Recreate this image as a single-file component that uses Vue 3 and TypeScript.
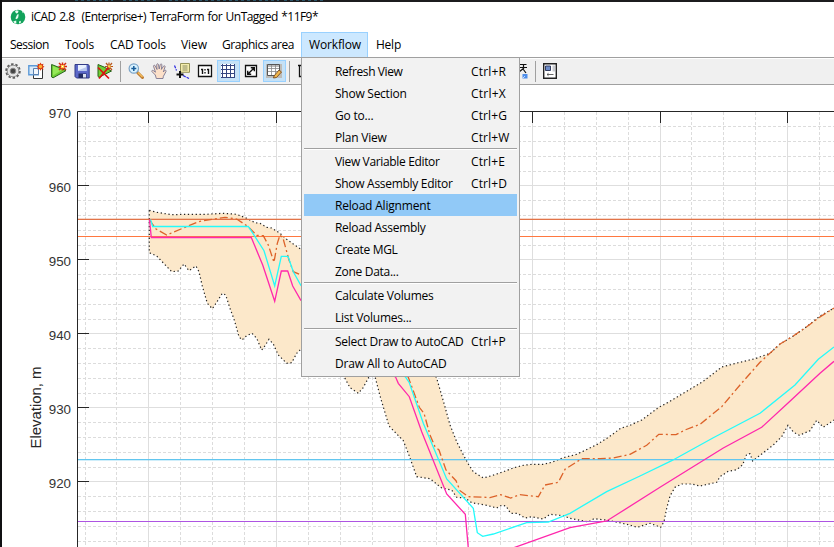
<script setup lang="ts">
interface MenuLabel { text: string; width: number; box: number; open?: boolean }
interface MenuEntry { text: string; width: number; keys?: string; keyWidth?: number; active?: boolean }

/* Spreads a label's letters so that it fills the given width. */
const vFit = {
  mounted(el: HTMLElement, binding: { value: number }) {
    const natural = el.getBoundingClientRect().width
    const count = (el.textContent ?? '').length
    el.style.letterSpacing = `${(binding.value - natural) / count}px`
  },
}

const title = 'iCAD 2.8\u00a0 (Enterprise+) TerraForm for UnTagged *11F9*'

const menus: MenuLabel[] = [
  { text: 'Session', width: 39, box: 55 },
  { text: 'Tools', width: 29, box: 45 },
  { text: 'CAD Tools', width: 56, box: 71 },
  { text: 'View', width: 26, box: 41 },
  { text: 'Graphics area', width: 72, box: 87 },
  { text: 'Workflow', width: 52, box: 67, open: true },
  { text: 'Help', width: 25, box: 41 },
]

const groups: MenuEntry[][] = [
  [
    { text: 'Refresh View', width: 67.5, keys: 'Ctrl+R', keyWidth: 35 },
    { text: 'Show Section', width: 71.5, keys: 'Ctrl+X', keyWidth: 35 },
    { text: 'Go to...', width: 38.5, keys: 'Ctrl+G', keyWidth: 36 },
    { text: 'Plan View', width: 51.5, keys: 'Ctrl+W', keyWidth: 38.5 },
  ],
  [
    { text: 'View Variable Editor', width: 104.5, keys: 'Ctrl+E', keyWidth: 34 },
    { text: 'Show Assembly Editor', width: 117.5, keys: 'Ctrl+D', keyWidth: 36 },
    { text: 'Reload Alignment', width: 95.5, active: true },
    { text: 'Reload Assembly', width: 90.5 },
    { text: 'Create MGL', width: 62.5 },
    { text: 'Zone Data...', width: 63.5 },
  ],
  [
    { text: 'Calculate Volumes', width: 98.500 },
    { text: 'List Volumes...', width: 76.500 },
  ],
  [
    { text: 'Select Draw to AutoCAD', width: 128.500, keys: 'Ctrl+P', keyWidth: 35 },
    { text: 'Draw All to AutoCAD', width: 111.500 },
  ],
]

const rows = [
  { y: 111, label: '970' }, { y: 185, label: '960' }, { y: 259, label: '950' },
  { y: 333, label: '940' }, { y: 407, label: '930' }, { y: 481, label: '920' },
]
const columns = [148, 276, 404, 532, 660, 787]
const minorOffsets = [15, 30, 45, 60]
const minorRows = rows.flatMap(r => minorOffsets.map(o => r.y + o))
const minorColumns = [85, 116, 180, 212, 244, 308, 340, 372, 436, 468, 500, 564, 596, 628, 691, 723, 755, 819]

const topEdge = '149.3,210.3 156.7,212.3 171.7,214.7 186.7,214.3 206.7,214.3 223,213.3 236.7,214.3 246.7,218.3 255,222.7 260,223.3 266.7,227.3 271.7,228 280,233.3 286.7,239.3 293.3,244 300.7,249 350,270 400,310 436.7,378.3 444,403.3 450,425 456.7,441.7 461.7,451.7 468.3,464 473.3,471.7 483.3,478 491.7,475.7 503.3,471.7 513.3,468 523.3,465.3 532,464.3 543.3,464.3 551.7,462.3 563.3,457.7 576.7,454.3 596.7,444.7 608.3,437.3 620.7,428.3 630,425.3 641.7,420 658.8,407.3 668.3,402.3 683.3,393.3 703.3,381.3 721.7,367 740,362.3 755,358.7 770,353.3 780,344 793.3,336 806.7,326.7 820,316 834,308'
const bottomEdge = '149.3,210.3 149.3,252.7 156.7,256 171.7,271.7 178.3,271 184,264 189,270.7 196,266 199,271.7 202.3,286 207.3,303.3 212.3,308.7 216.7,302.3 222.3,293.3 225.7,295 230,308.3 234.3,320 239,336.7 242,340 246.7,335.7 252,333.3 256.7,338.3 261.7,350 265,345.7 269,339.3 273.3,344 278.3,355 286.7,363.3 291.7,362.7 296.7,353.3 300.7,349.3 335,360 345,378.3 350,387.7 358.3,393.3 362.7,388.3 368.3,378.3 371,370 374,370 375.7,379.3 380.7,398.3 389,426 403.3,440.7 408.3,453.3 416.7,476.7 430,478.7 441.7,488 451.7,490 456.7,497.3 465,498 471.7,502.7 486.7,505.3 496.7,508 501.7,505.3 506,506 510.7,513.3 517.3,513.3 525,518 531.7,516.7 543.3,519 550,514.3 563.3,515.7 570,518.3 588.3,522 594,518.7 608.3,520.3 626.7,524.3 637.3,527.3 650,523.3 660.7,527.3 664,521.7 666.7,508.3 670,496 675,487.3 681.7,484 691.7,484 700,486 716.7,482.3 720,476.7 728.3,471.3 736.7,469.7 742.7,464.7 746.7,454.3 750,453.7 752.7,461 761.7,454 773.3,445 781.7,436.7 788,425.3 793.3,432 799.3,435.3 810,430.7 816.7,420.3 823.3,427.3 830,422.7 834,420'
const zone = `${topEdge} ${bottomEdge.split(' ').reverse().join(' ')}`

const ground = '149.3,219.5 156,229 166.7,235 198.3,221.7 211.7,219.3 225,217.3 236.7,219 248.3,226.7 256.7,235.3 263.3,235.7 268.3,245 274,262.3 277.3,243.3 280,235 283.3,239.3 289,260 293.3,271.7 300.7,274.7 350,300 408.3,377.3 414,392.7 419.3,407.3 424,413.3 430,435 435,446.7 439,450 446,470 456,480.7 460,490.7 468.3,496.7 486.7,497.3 490,497.7 500.7,494.7 510.7,498 520,494.7 538.3,496.7 545,485 558.3,482.3 565,469.3 581.7,458.7 600,458.7 613.3,458 630,454.3 646.7,445.3 658.8,434.3 676,434.7 685,430 700,424.3 721.7,406.7 740,385 760,362.3 780,344 793.3,336 806.7,326.7 820,317 834,308'
const design = '150.5,219.5 152.7,226.5 248.3,226.5 255,236.7 264,250.7 274.7,286 281.3,256.3 288,256.3 293.3,271.7 300.7,285 360,340 405.7,377.3 409.3,382.7 423.3,423.3 446.7,479 473.3,508.3 477.3,532.7 482.7,536.3 493.3,534 526.7,522.7 548.3,522 570,513.3 606.7,491.7 640,476 671.7,460.7 713.3,437.7 760,413.3 795,385 818.3,359.3 834,347'
const formation = '149.5,219.5 151.3,237.5 251.3,237.5 262.7,265 274.7,301.3 281.3,271 287.7,271 292.7,286 300.7,300 350,340 395.7,377.3 398.3,383.3 409.3,396.7 421.7,431.7 446.7,494 465.3,514.3 468.3,548'
const formationEast = '513,548 570,527.7 606.7,521 660,487.3 723.3,448 761.7,427.3 788.3,402.7 820,373.3 834,361.3'
</script>

<template>
  <div class="screen">
    <div class="backdrop"><i class="code c1"></i><i class="code c2"></i><i class="code c3"></i><i class="code c4"></i></div>
    <div class="window">
      <header class="titlebar">
        <svg class="logo" width="16" height="16" viewBox="0 0 16 16">
          <circle cx="8" cy="8" r="7.3" fill="#12a25b" />
          <path d="M5 2.2 6.3 1.2 8.6 1.8 8 3.8 6.8 4.6 5.8 4zM7.2 5.6 8.7 5.2 8.2 8.5 6.8 10.3 5.4 9.6zM3.2 12.6 6.2 11.5 6.4 14.6 4.8 14.6zM9 12.6l1.8-.8-.1 2.2-1.6.5z" fill="#e9fbf1" />
          <path d="M12 1.5 13.8 3 12.8 4.2z" fill="#fff" />
        </svg>
        <span v-fit="287" class="label title">{{ title }}</span>
      </header>

      <nav class="menubar">
        <div v-for="m in menus" :key="m.text" class="menu" :class="{ open: m.open }" :style="{ width: m.box + 'px' }">
          <span v-fit="m.width" class="label">{{ m.text }}</span>
        </div>
      </nav>

      <div class="toolbar">
        <button class="tool first">
          <svg viewBox="0 0 16 16"><circle cx="8" cy="8" r="6.900" fill="none" stroke="#5c5c5c" stroke-width="1.700" stroke-dasharray="2.500 1.835" /><circle cx="8" cy="8" r="5.800" fill="#e4e4e4" stroke="#777" stroke-width=".8" /><circle cx="8" cy="8" r="2.800" fill="#444" stroke="#8a8a8a" /></svg>
        </button>
        <button class="tool">
          <svg viewBox="0 0 16 16"><path d="M5.500 5.500h9v10h-9z" fill="#fff" stroke="#333" /><path d="M.8 2.800h9.500v9H.8z" fill="#d5e8fb" fill-opacity=".8" stroke="#5d9ad8" stroke-width="1.400" /><path d="M5.500 5.500h5v6h-5z" fill="#f4f7fb" stroke="#5a81b0" /><path d="m12.500-.5 1 1.800 2-.6-.6 2 1.600 1-1.600 1 .6 2-2-.6-1 1.700-1-1.700-2 .6.6-2-1.600-1 1.600-1-.6-2 2 .6z" fill="#d93a13" /><circle cx="12.500" cy="3.500" r="1.700" fill="#ffb435" /></svg>
        </button>
        <button class="tool">
          <svg viewBox="0 0 16 16"><path d="M.6 1.500V14l1.500.8L15 7.600 7 4z" fill="#70cf36" stroke="#28651b" /><path d="m2 3 9 4-9 5.500z" fill="#95e858" /><path d="m8 0 7 7M15 0 8 7M11.500-.5v8M7.500 3.500h8.500" stroke="#d72d12" stroke-width="1.500" /><path d="M10 2h3.200v3.200H10z" fill="#ffd348" /><path d="m11 3 1 1" stroke="#fff" /></svg>
        </button>
        <button class="tool">
          <svg viewBox="0 0 16 16"><path d="M1 1.500h13l1.200 1V15H2.500L1 13.500z" fill="#5b68c8" stroke="#333b87" /><path d="M4 2h8.500v6H4z" fill="#e8f0ff" /><path d="M4 7.500 12.500 4v4H4z" fill="#b8c6ee" /><path d="M4.500 10.500h8V15h-8z" fill="#222b63" /><path d="M9 11h3v3.500H9z" fill="#dce2ee" /></svg>
        </button>
        <button class="tool">
          <svg viewBox="0 0 16 16"><path d="M1 1.500v12l1 .8L14.500 8 7 4z" fill="#70cf36" stroke="#28651b" /><path d="m9 0 6 7m0-7L9 7m3-7.500V7M8 3.500h8" stroke="#b85720" stroke-width="1.200" /><path d="M11 2.200h2.500v2.500H11z" fill="#ffd348" /><path d="m1 4.500 11 11M11.500 4.500 2 15.500" stroke="#dc1010" stroke-width="1.700" /></svg>
        </button>
        <i class="divider early"></i>
        <button class="tool">
          <svg viewBox="0 0 16 16"><path d="m9.500 9.500 5 5" stroke="#bd7b32" stroke-width="3" stroke-linecap="round" /><path d="m10 9.500 4.500 4.500" stroke="#f5c05f" stroke-width="1.300" /><circle cx="5.800" cy="5.500" r="4.700" fill="#d8f2ff" stroke="#7ba4c8" stroke-width="1.200" /><path d="M5.800 3v5M3.300 5.500h5" stroke="#175b99" stroke-width="1.500" /></svg>
        </button>
        <button class="tool">
          <svg viewBox="0 0 16 16"><path d="M5.300 15.500 4.300 12 .9 8.500c-.4-1 .6-1.600 1.600-.8l2 1.500-2-6c0-1.200 1.400-1.300 1.800-.2L6 6.500 5.700 1.700C5.900.4 7.200.4 7.500 1.700L8.200 6l1-4.300c.4-1.200 1.800-.9 1.700.3l-.5 4.400L12.500 3.200c.8-.9 1.900-.3 1.500.8l-1.700 5 1.300-1.500c.9-.7 1.900.1 1.400 1l-2.600 4.800-.4 2.200z" fill="#fce0c9" stroke="#7b7590" stroke-width=".9" /></svg>
        </button>
        <button class="tool">
          <svg viewBox="0 0 16 16"><path d="M6.500.5h9v8.800h-9z" fill="#f4edac" stroke="#96935a" /><path d="M8.500 3h5M8.500 5h5M8.500 7h5" stroke="#8b8b68" /><path d="m.5 2.500 2 5M9 12.500l6 3" stroke="#2827e2" stroke-width="1.200" stroke-dasharray="3 1" /><path d="M6 8v7M2.500 11.500h7" stroke="#111" stroke-width="2" /></svg>
        </button>
        <button class="tool">
          <svg viewBox="0 0 16 16"><path d="M1.500 2.500h13v11h-13z" fill="#fff" stroke="#111" stroke-width="1.300" /><path d="M4 6.500h1.500V11M10 6.500h1.500V11" stroke="#111" fill="none" stroke-width="1.400" /><path d="M8 6v1.500M8 9v1.500" stroke="#111" stroke-width="1.300" /></svg>
        </button>
        <button class="tool on">
          <svg viewBox="0 0 16 16"><path d="M1 1h14v14H1z" fill="#fff" /><path d="M2.500 1v14M6.500 1v14M10.500 1v14M14.500 1v14M1 2.500h14M1 6.500h14M1 10.500h14M1 14.500h14" stroke="#344580" /></svg>
        </button>
        <button class="tool">
          <svg viewBox="0 0 16 16"><path d="M2.500 2.500h11v11h-11z" fill="#fff" stroke="#111" stroke-width="1.300" /><path d="m5 11 6-6M7.800 4.700h3.500v3.500M4.700 7.800v3.500h3.500" fill="none" stroke="#111" stroke-width="1.400" /></svg>
        </button>
        <button class="tool on">
          <svg viewBox="0 0 16 16"><path d="M0 1h16v14H0z" fill="#bdbcb9" /><path d="M1.500 1.500h12v9l-2 2h-10z" fill="#fff" stroke="#555" /><path d="M2 2h11v2H2z" fill="#bbb" /><path d="M2 5.500h11M2 8.500h11M5.500 2v10M9.500 2v10" stroke="#888" stroke-width=".8" /><path d="m8 13 5-6 2.500 2-5 5.500-3 .5z" fill="#f1b74c" stroke="#774920" stroke-width=".9" /></svg>
        </button>
        <i class="divider"></i>
        <button class="tool">
          <svg viewBox="0 0 16 16"><path d="M1 2.500h4M2.500 2v11.500H14" fill="none" stroke="#111" stroke-width="1.300" /></svg>
        </button>
        <span class="stretch"></span>
        <button class="tool">
          <svg viewBox="0 0 16 16"><path d="M3 1.500h11.500M8 4.500h7M11.500 1v4M12 5 7 9M11 6l3 4" stroke="#111" stroke-width="1.200" fill="none" /><path d="M10.500 11h5v4.500h-5z" fill="#4e8eea" /><path d="m11 15 2-2" stroke="#c5dcff" /></svg>
        </button>
        <i class="divider late"></i>
        <button class="tool">
          <svg viewBox="0 0 16 16"><path d="M1.700.700h12.600v14.600H1.700z" fill="#fff" stroke="#222" stroke-width="1.400" /><path d="M3.500 3h5v4.500h-5z" fill="#6d8cca" stroke="#333d60" /><path d="M10.500 2.500H13v6h-2.500z" fill="#c9cbd1" /><path d="M5 11.500h6.500M6.500 10.300l-1.500 1.200 1.500 1.200" fill="none" stroke="#555" stroke-width=".9" /></svg>
        </button>
      </div>

      <main class="plot">
        <svg width="832" height="462" viewBox="2 85 832 462">
          <g class="major">
            <path v-for="r in rows" :key="r.label" :d="`M78 ${r.y + 0.5}H834`" />
            <path v-for="x in columns" :key="x" :d="`M${x + 0.5} 112V547`" />
          </g>
          <g class="minor">
            <path v-for="y in minorRows" :key="y" :d="`M78 ${y + 0.5}H834`" />
            <path v-for="x in minorColumns" :key="x" :d="`M${x + 0.5} 112V547`" />
          </g>
          <polygon :points="zone" fill="#fce8ca" />
          <polyline class="edge" :points="topEdge" />
          <polyline class="edge" :points="bottomEdge" />
          <path d="M78 219.500H834" stroke="#e27448" /><path d="M78 218.500H834" stroke="#e27448" stroke-opacity=".3" />
          <path d="M78 236.500H834" stroke="#ff7840" />
          <path d="M78 459.500H834" stroke="#62c6ef" /><path d="M78 460.500H834" stroke="#62c6ef" stroke-opacity=".3" />
          <path d="M78 521.500H834" stroke="#ad55e2" />
          <polyline class="trace ground" :points="ground" />
          <polyline class="trace design" :points="design" />
          <polyline class="trace formation" :points="formation" />
          <polyline class="trace formation" :points="formationEast" />
          <path class="axis" d="M77.500 547V111.500H834" />
          <g class="axis">
            <path v-for="r in rows" :key="r.label" :d="`M78 ${r.y + 0.5}h11`" />
            <path v-for="x in columns" :key="x" :d="`M${x + 0.5} 112v11`" />
          </g>
          <text v-for="r in rows" :key="r.label" class="tick" x="71" :y="r.y + 7">{{ r.label }}</text>
          <text class="axis-name" transform="translate(41.300 448.500) rotate(-90)" textLength="82">Elevation, m</text>
        </svg>
      </main>
    </div>

    <div class="dropdown">
      <template v-for="(group, g) in groups" :key="g">
        <hr v-if="g > 0">
        <div v-for="entry in group" :key="entry.text" class="entry" :class="{ active: entry.active }">
          <span class="name"><span v-fit="entry.width" class="label">{{ entry.text }}</span></span>
          <span v-if="entry.keys" v-fit="entry.keyWidth ?? 35" class="label">{{ entry.keys }}</span>
        </div>
      </template>
    </div>
  </div>
</template>

<style>
body { margin: 0; overflow: hidden; }
</style>

<style scoped>
.screen {
  position: relative;
  box-sizing: border-box;
  width: 834px;
  height: 547px;
  padding-left: 2px;
  background: #101012;
  overflow: hidden;
  font: 12px/16px "Open Sans", "Noto Sans", sans-serif;
  color: #000;
}
.label { display: inline-block; white-space: nowrap; }
.title { word-spacing: 1px; }
.backdrop { display: flex; height: 2px; padding-left: 73px; background: #1c1c1e; }
.code { height: 1px; background: repeating-linear-gradient(90deg, #2b5468 0 3px, #1c1c1e 3px 6px); }
.c1 { width: 38px; }
.c2 { width: 36px; margin-left: 10px; }
.c3 { width: 110px; margin-left: 10px; }
.c4 { width: 40px; margin-left: 5px; }
.window { display: flex; flex-direction: column; height: 545px; background: #fff; }
.titlebar { display: flex; align-items: center; flex: none; height: 30px; padding-left: 8px; }
.logo { margin-right: 5px; }
.menubar { display: flex; flex: none; height: 25px; }
.menu { box-sizing: border-box; height: 25px; padding: 5px 0 0 8px; }
.menu.open { padding: 4px 0 0 7px; border: 1px solid #99d1ff; border-bottom: 0; background: #cce8ff; }
.toolbar {
  display: flex;
  align-items: center;
  box-sizing: border-box;
  flex: none;
  height: 28px;
  border-top: 1px solid #a0a0a0;
  border-bottom: 1px solid #a0a0a0;
  background: #f0f0f0;
  box-shadow: inset 0 1px #fff;
}
.tool {
  display: flex;
  align-items: center;
  justify-content: flex-start;
  box-sizing: border-box;
  flex: none;
  width: 23px;
  height: 22px;
  padding: 0 0 0 2px;
  border: 1px solid transparent;
  background: none;
}
.tool svg { width: 16px; height: 16px; overflow: visible; }
.tool.on { border-color: #99d1ff; background: #c5e1f6; }
.divider { flex: none; width: 1px; height: 21px; margin: 0 4px 0 3px; background: #a0a0a0; }
.divider.late { margin: 0 3px; }
.stretch { width: 192px; }
.plot { flex: none; height: 462px; }
.plot svg { display: block; }
.major path { stroke: #dedede; }
.minor path { stroke: #dcdcdc; stroke-dasharray: 3 2; }
.edge { fill: none; stroke: #222; stroke-width: 1.2; stroke-dasharray: 1.3 2.6; }
.trace { fill: none; stroke-width: 1.3; }
.ground { stroke: #dc6229; stroke-dasharray: 8 3 2 3; }
.design { stroke: #24fbfb; }
.formation { stroke: #ff27ac; }
.axis { fill: none; stroke: #262626; stroke-width: 1; }
.tick { font: 13.33px "Liberation Sans", Arial, sans-serif; fill: #333; text-anchor: end; }
.axis-name { font: 15px "Liberation Sans", Arial, sans-serif; fill: #262626; }
.dropdown {
  position: absolute;
  left: 301px;
  top: 57px;
  box-sizing: border-box;
  width: 219px;
  padding: 2px;
  border: 1px solid #a0a0a0;
  background: #f2f2f2;
}
.dropdown hr { height: 1px; margin: 0; border: 0; border-top: 1px solid #a0a0a0; background: #fff; }
.entry { display: flex; align-items: center; box-sizing: border-box; height: 22px; padding: 2px 0 0 31px; }
.entry.active { background: #91c9f7; }
.name { width: 136px; }
</style>
